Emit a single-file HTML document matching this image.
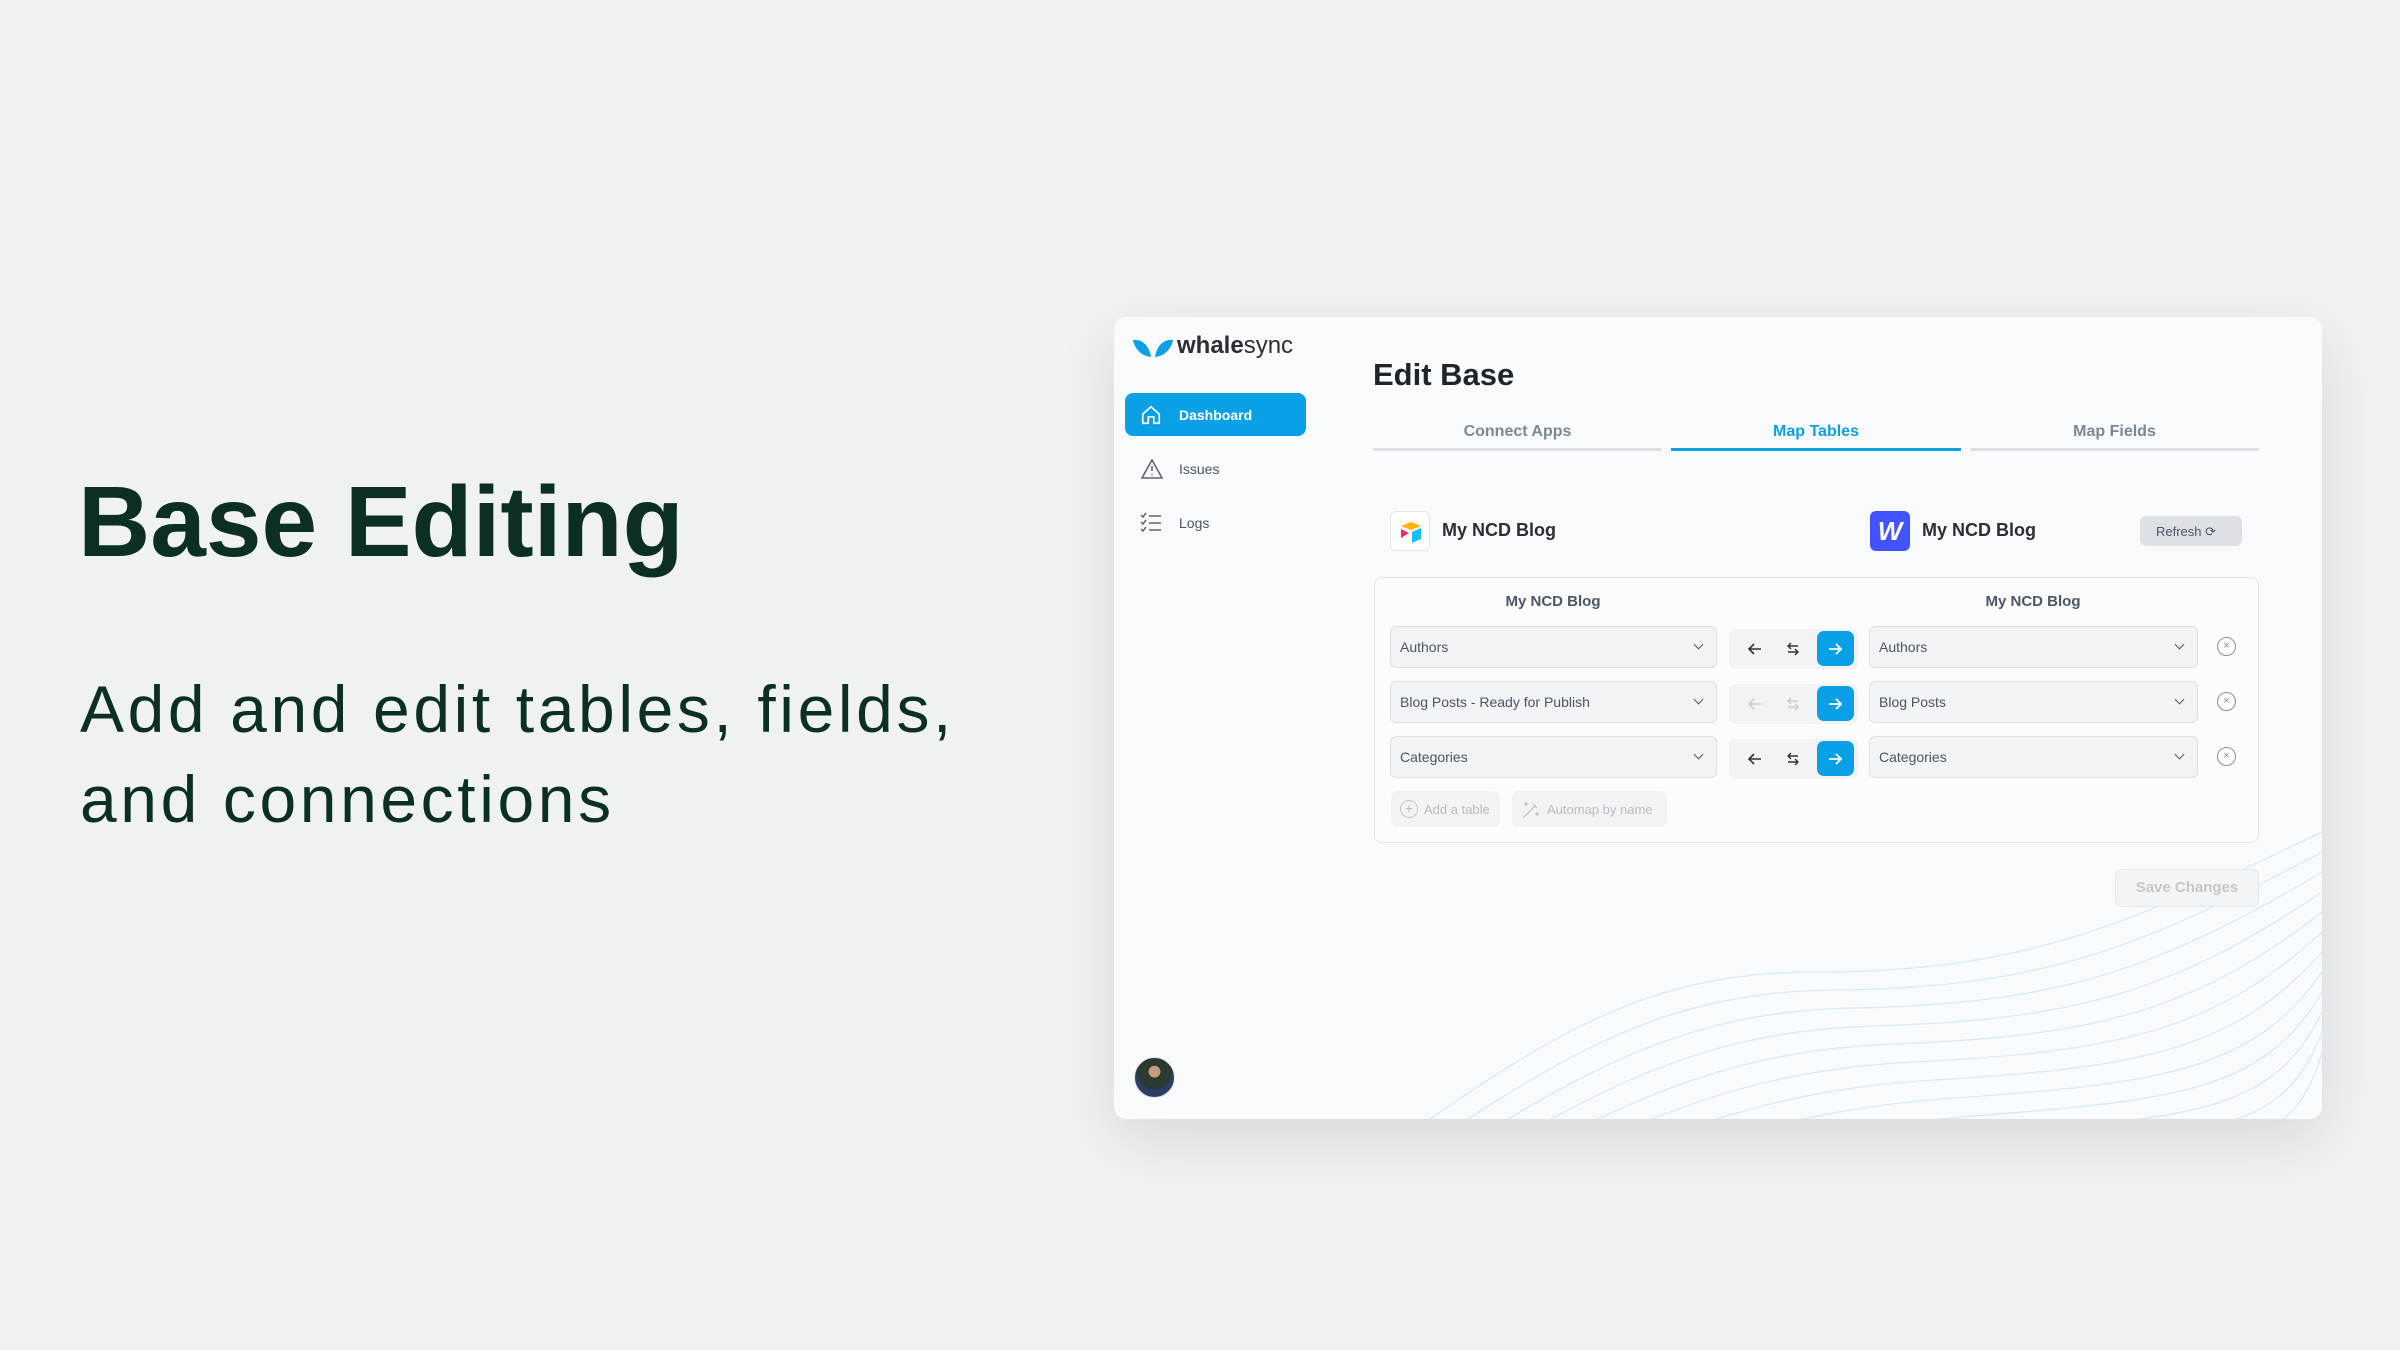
<!DOCTYPE html>
<html><head><meta charset="utf-8"><style>
*{box-sizing:border-box;margin:0;padding:0}
body{width:2400px;height:1350px;background:#f0f1f3;font-family:"Liberation Sans",sans-serif;position:relative;overflow:hidden}
.abs{position:absolute}
h1{position:absolute;left:78px;top:462px;font-size:100px;font-weight:bold;color:#0b2f27;letter-spacing:0px;line-height:120px}
.sub{position:absolute;left:80px;top:664px;font-size:66px;color:#0b2f27;line-height:90px;letter-spacing:3.6px}
.panel{position:absolute;left:1114px;top:317px;width:1208px;height:802px;background:#f9fafc;border-radius:12px;box-shadow:0 20px 60px rgba(0,0,0,0.10);overflow:hidden}
.nav{position:absolute;left:11px;width:181px;height:43px;border-radius:8px;font-size:14px;color:#4b5563;display:flex;align-items:center;padding-left:54px}
.nav svg{position:absolute;left:15px;top:11px}
.tab{position:absolute;top:106px;height:28px;font-size:16px;font-weight:bold;color:#7b8794;text-align:center;border-bottom:3px solid #dde1e6}
.sel{position:absolute;height:42px;background:#f2f3f5;border:1.5px solid #dcdfe3;border-radius:6px;font-size:14px;color:#4b5563;padding:12px 0 0 9px}
.sel:after{content:"";position:absolute;right:14px;top:14px;width:6px;height:6px;border-right:1.5px solid #555;border-bottom:1.5px solid #555;transform:rotate(45deg)}
.grp{position:absolute;width:129px;height:40px;background:#f2f3f5;border-radius:7px}
.grp svg{position:absolute;top:12px}
.blue{position:absolute;left:88px;top:2px;width:37px;height:35px;background:#0aa0e6;border-radius:7px}
.blue svg{left:10px;top:10px}
.xc{position:absolute;width:19px;height:19px;border:1.5px solid #888e96;border-radius:50%;font-size:11px;color:#888e96;text-align:center;line-height:16px}
</style></head><body>
<h1>Base Editing</h1>
<div class="sub">Add and edit tables, fields,<br>and connections</div>

<div class="panel">
 <svg class="abs" style="left:0;top:0" width="1208" height="802">
  <g fill="none" stroke="#d3eaf7" stroke-width="1.3" transform="translate(0,95)">
   <path d="M180 802 C400 650 500 560 700 560 S1000 520 1208 420"/>
   <path d="M210 802 C420 665 520 580 720 578 S1020 540 1208 440"/>
   <path d="M240 802 C440 680 540 600 740 596 S1040 560 1208 460"/>
   <path d="M270 802 C460 695 560 620 760 614 S1060 580 1208 480"/>
   <path d="M300 802 C480 710 580 640 780 632 S1080 600 1208 500"/>
   <path d="M330 802 C500 725 600 660 800 650 S1100 620 1208 520"/>
   <path d="M360 802 C520 740 620 680 820 668 S1120 640 1208 540"/>
   <path d="M390 802 C540 755 640 700 840 686 S1140 660 1208 560"/>
   <path d="M420 802 C560 770 660 720 860 704 S1150 680 1208 580"/>
   <path d="M450 802 C580 785 680 740 880 722 S1160 700 1208 600"/>
   <path d="M480 802 C600 800 700 760 900 740 S1170 720 1208 620"/>
   <path d="M540 802 C640 800 720 780 920 758 S1180 740 1208 640"/>
  </g>
 </svg>
 <svg class="abs" style="left:18px;top:20px" width="42" height="22" viewBox="0 0 42 22"><path d="M1 3 C10 2 17 8 19 20 C10 19 3 13 1 3Z" fill="#0aa0e6"/><path d="M41 3 C32 2 25 8 23 20 C32 19 39 13 41 3Z" fill="#0aa0e6"/></svg>
 <div class="abs" style="left:63px;top:15px;font-size:24px;color:#2b2f33"><b>whale</b>sync</div>
 <div class="nav" style="top:76px;background:#0aa0e6;color:#fff;font-weight:bold">
  <svg width="22" height="22" viewBox="0 0 24 24" fill="none" stroke="#fff" stroke-width="1.8"><path d="M3 11 L12 3 L21 11 V21 H15 V14 H9 V21 H3Z"/></svg>Dashboard</div>
 <div class="nav" style="top:130px">
  <svg width="24" height="22" viewBox="0 0 24 22" fill="none" stroke="#5f6670" stroke-width="1.6"><path d="M12 2 L22 20 H2Z"/><path d="M12 8 V13 M12 16 V17"/></svg>Issues</div>
 <div class="nav" style="top:184px">
  <svg width="22" height="20" viewBox="0 0 22 20" fill="none" stroke="#5f6670" stroke-width="1.5"><path d="M1 3 l2 2 3-4 M1 10 l2 2 3-4 M1 17 l2 2 3-4 M9 4 H21 M9 11 H21 M9 18 H21"/></svg>Logs</div>
 <div class="abs" style="left:20px;top:740px;width:41px;height:41px;border-radius:50%;background:radial-gradient(circle at 50% 35%,#c89a80 0 18%,#2a3a30 19% 55%,#2c3e63 56%);border:1.5px solid #dfe3e8"></div>

 <div class="abs" style="left:259px;top:40px;font-size:31px;font-weight:bold;color:#1f2428">Edit Base</div>
 <div class="tab" style="left:259px;width:289px">Connect Apps</div>
 <div class="tab" style="left:557px;width:290px;color:#0aa0e6;border-color:#0aa0e6">Map Tables</div>
 <div class="tab" style="left:856px;width:289px">Map Fields</div>

 <div class="abs" style="left:276px;top:194px;width:40px;height:40px;background:#fff;border:1px solid #e4e6ea;border-radius:6px">
  <svg width="40" height="40" viewBox="0 0 40 40"><path d="M20 10 L30 14 L20 18 L10 14Z" fill="#fcb400"/><path d="M21 20 L30 16 V27 L21 31Z" fill="#18bfff"/><path d="M10 17 L18 21 L10 26Z" fill="#f82b60"/></svg></div>
 <div class="abs" style="left:328px;top:203px;font-size:18px;font-weight:bold;color:#2b2f33">My NCD Blog</div>
 <div class="abs" style="left:756px;top:194px;width:40px;height:40px;background:#4353ff;border-radius:6px;color:#fff;font-size:26px;font-weight:bold;font-style:italic;text-align:center;line-height:40px">W</div>
 <div class="abs" style="left:808px;top:203px;font-size:18px;font-weight:bold;color:#2b2f33">My NCD Blog</div>
 <div class="abs" style="left:1026px;top:199px;width:102px;height:30px;background:#dde1e5;border-radius:6px;font-size:13px;color:#4b5563;padding:8px 0 0 16px">Refresh ⟳</div>

 <div class="abs" style="left:260px;top:260px;width:885px;height:266px;border:1.5px solid #e1e4e8;border-radius:8px;background:#fcfcfd"></div>
 <div class="abs" style="left:389px;top:276px;width:100px;text-align:center;font-size:15px;font-weight:bold;color:#4b5563">My NCD Blog</div>
 <div class="abs" style="left:869px;top:276px;width:100px;text-align:center;font-size:15px;font-weight:bold;color:#4b5563">My NCD Blog</div>

 <div class="sel" style="left:276px;top:309px;width:327px">Authors</div>
 <div class="grp" style="left:615px;top:312px">
  <svg style="left:18px" width="16" height="16" viewBox="0 0 16 16" fill="none" stroke="#333" stroke-width="1.6"><path d="M14 8H2M7 3L2 8l5 5"/></svg>
  <svg style="left:56px" width="16" height="16" viewBox="0 0 16 16" fill="none" stroke="#333" stroke-width="1.4"><path d="M13 5H3M6 2L3 5l3 3M3 11h10M10 8l3 3-3 3"/></svg>
  <div class="blue"><svg width="16" height="16" viewBox="0 0 16 16" fill="none" stroke="#fff" stroke-width="1.8"><path d="M2 8h12M9 3l5 5-5 5"/></svg></div></div>
 <div class="sel" style="left:755px;top:309px;width:329px">Authors</div>
 <div class="xc" style="left:1103px;top:320px">×</div>

 <div class="sel" style="left:276px;top:364px;width:327px">Blog Posts - Ready for Publish</div>
 <div class="grp" style="left:615px;top:367px">
  <svg style="left:18px" width="16" height="16" viewBox="0 0 16 16" fill="none" stroke="#ccc" stroke-width="1.6"><path d="M14 8H2M7 3L2 8l5 5"/></svg>
  <svg style="left:56px" width="16" height="16" viewBox="0 0 16 16" fill="none" stroke="#ccc" stroke-width="1.4"><path d="M13 5H3M6 2L3 5l3 3M3 11h10M10 8l3 3-3 3"/></svg>
  <div class="blue"><svg width="16" height="16" viewBox="0 0 16 16" fill="none" stroke="#fff" stroke-width="1.8"><path d="M2 8h12M9 3l5 5-5 5"/></svg></div></div>
 <div class="sel" style="left:755px;top:364px;width:329px">Blog Posts</div>
 <div class="xc" style="left:1103px;top:375px">×</div>

 <div class="sel" style="left:276px;top:419px;width:327px">Categories</div>
 <div class="grp" style="left:615px;top:422px">
  <svg style="left:18px" width="16" height="16" viewBox="0 0 16 16" fill="none" stroke="#333" stroke-width="1.6"><path d="M14 8H2M7 3L2 8l5 5"/></svg>
  <svg style="left:56px" width="16" height="16" viewBox="0 0 16 16" fill="none" stroke="#333" stroke-width="1.4"><path d="M13 5H3M6 2L3 5l3 3M3 11h10M10 8l3 3-3 3"/></svg>
  <div class="blue"><svg width="16" height="16" viewBox="0 0 16 16" fill="none" stroke="#fff" stroke-width="1.8"><path d="M2 8h12M9 3l5 5-5 5"/></svg></div></div>
 <div class="sel" style="left:755px;top:419px;width:329px">Categories</div>
 <div class="xc" style="left:1103px;top:430px">×</div>

 <div class="abs" style="left:277px;top:474px;width:109px;height:36px;background:#f2f3f5;border-radius:7px;font-size:13px;color:#b8bdc3;padding:11px 0 0 33px"><span class="abs" style="left:9px;top:9px;width:18px;height:18px;border:1.5px solid #c3c7cc;border-radius:50%;text-align:center;line-height:14px;font-size:14px">+</span>Add a table</div>
 <div class="abs" style="left:398px;top:474px;width:155px;height:36px;background:#f2f3f5;border-radius:7px;font-size:13px;color:#b8bdc3;padding:11px 0 0 35px">
  <svg class="abs" style="left:9px;top:9px" width="20" height="20" viewBox="0 0 20 20" fill="none" stroke="#c3c7cc" stroke-width="1.4"><path d="M2 18L14 6M12 4l4 4M5 2v4M3 4h4M16 12v4M14 14h4"/></svg>Automap by name</div>

 <div class="abs" style="left:1001px;top:552px;width:144px;height:38px;background:#f3f4f6;border:1.5px solid #e4e6ea;border-radius:7px;font-size:15px;font-weight:bold;color:#c4c8cd;text-align:center;line-height:35px">Save Changes</div>
</div>
</body></html>
